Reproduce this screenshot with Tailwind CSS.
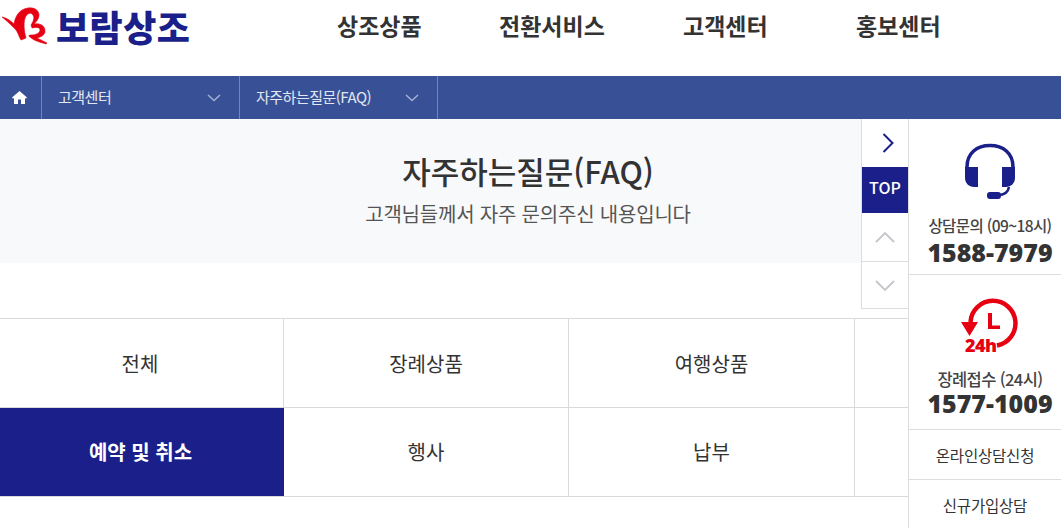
<!DOCTYPE html>
<html lang="ko">
<head>
    <meta charset="UTF-8">
    <title>자주하는질문(FAQ)</title>
    <script src="https://cdn.jsdelivr.net/npm/@tailwindcss/browser@4"></script>
</head>
<body class="bg-white overflow-hidden font-['Noto_Sans_CJK_KR','Noto_Sans',sans-serif]">
<div class="relative w-[1061px] h-[528px] overflow-hidden">

    <!-- Header -->
    <header class="h-[76px] flex items-start">
        <div class="w-[300px] h-[50px] flex items-center">
            <svg width="50" height="42" viewBox="0 4 50 42" class="shrink-0">
                <path fill="#e60012" stroke="#e60012" stroke-width="0.600" d="M2 17C7 18 11 21 14 24C15 17 19 9 28 8C35 7 39 11 39 15C39 19 36 22 34 24C39 23 45 25 45 31C45 35 41 37 37 38L47 43L46 44C40 42 34 41 30 37C28 36 29 35 31 35C36 35 40 33 40 30C40 27 36 27 32 28L31 25C33 22 35 18 33 15C31 12 28 13 26 16C23 21 24 31 26 38L21 40C18 35 18 31 13 27C10 24 6 20 2 17Z"/>
            </svg>
            <span class="text-[36px] leading-none font-black text-[#1a1f8a] tracking-[0.5px] ml-[6px] mt-[2px] whitespace-nowrap">보람상조</span>
        </div>
        <nav class="flex text-[23px] font-bold text-[#333] leading-none pt-[14px]">
            <a class="w-[84px] ml-[37px] whitespace-nowrap">상조상품</a>
            <a class="w-[106px] ml-[78px] whitespace-nowrap">전환서비스</a>
            <a class="w-[84px] ml-[78px] whitespace-nowrap">고객센터</a>
            <a class="w-[84px] ml-[89px] whitespace-nowrap">홍보센터</a>
        </nav>
    </header>

    <!-- Breadcrumb -->
    <div class="h-[43px] bg-[#385196] flex text-[15px] text-[#e3e7f2]">
        <div class="w-[42px] flex items-center justify-center border-r border-[#7486b8] pr-[2px]">
            <svg width="15" height="13" viewBox="0 0 15 13"><path fill="#fff" d="M7.500 0 0 6.500l1 1.200 1-.8V13h4V8.500h3V13h4V6.900l1 .8 1-1.200z"/></svg>
        </div>
        <div class="w-[198px] flex items-center justify-between pl-[16px] pr-[18px] border-r border-[#7486b8]">
            <span class="tracking-[-0.5px]">고객센터</span>
            <svg width="14" height="8" viewBox="0 0 14 8" fill="none" stroke="#a5b1d2" stroke-width="1.500"><path d="m1 1 6 5.500L13 1"/></svg>
        </div>
        <div class="w-[198px] flex items-center justify-between pl-[16px] pr-[18px] border-r border-[#7486b8]">
            <span class="tracking-[-0.5px] whitespace-nowrap">자주하는질문(FAQ)</span>
            <svg width="14" height="8" viewBox="0 0 14 8" fill="none" stroke="#a5b1d2" stroke-width="1.500"><path d="m1 1 6 5.500L13 1"/></svg>
        </div>
    </div>

    <div class="flex h-[409px]">
        <!-- Main -->
        <main class="w-[908px] shrink-0">
            <section class="h-[144px] bg-[#f8f9fb] flex flex-col items-center pt-[30px] pl-[148px]">
                <h1 class="text-[31px] leading-[44px] font-medium text-[#333]">자주하는질문(FAQ)</h1>
                <p class="text-[20px] leading-[28px] tracking-[-0.2px] text-[#555] mt-[7px]">고객님들께서 자주 문의주신 내용입니다</p>
            </section>
            <div class="mt-[55px] border-t border-[#d9d9d9] grid grid-cols-[284px_285px_286px_53px] grid-rows-[89px_89px] text-[20px] text-[#333]">
                <a class="flex items-center justify-center border-r border-b border-[#d9d9d9] pr-[3px] pt-[2px]">전체</a>
                <a class="flex items-center justify-center border-r border-b border-[#d9d9d9] pt-[2px]">장례상품</a>
                <a class="flex items-center justify-center border-r border-b border-[#d9d9d9] pt-[2px]">여행상품</a>
                <a class="border-b border-[#d9d9d9]"></a>
                <a class="flex items-center justify-center bg-[#1a1f8a] text-white font-bold border-b border-[#d9d9d9] pr-[3px]">예약 및 취소</a>
                <a class="flex items-center justify-center border-r border-b border-[#d9d9d9]">행사</a>
                <a class="flex items-center justify-center border-r border-b border-[#d9d9d9]">납부</a>
                <a class="border-b border-[#d9d9d9]"></a>
            </div>
        </main>

        <!-- Right contact rail -->
        <aside class="w-[153px] shrink-0 border-l border-[#ddd] flex flex-col text-[#333]">
            <div class="h-[156px] shrink-0 border-b border-[#ddd] flex flex-col items-center pt-[24px] pl-[10px]">
                <svg width="52" height="58" viewBox="0 0 52 58" fill="none" class="shrink-0">
                    <path stroke="#1a1f8a" stroke-width="3.500" d="M3 24C3 10 13 2.500 26 2.500S49 10 49 24"/>
                    <path fill="#1a1f8a" d="M1 24H14V44H10C5 44 1 40 1 35zM38 24H51V35C51 40 47 44 42 44H38z"/>
                    <path stroke="#1a1f8a" stroke-width="2.500" d="M45 44C44 50 39 52 34 52"/>
                    <rect x="23" y="49" width="14" height="7" rx="3" fill="#1a1f8a"/>
                </svg>
                <p class="text-[15.500px] leading-[20px] tracking-[-0.6px] mt-[14px] font-medium text-[#444] whitespace-nowrap">상담문의 (09~18시)</p>
                <p class="text-[25px] leading-[30px] font-black text-[#333] font-['Noto_Sans',sans-serif] mt-[2px]">1588-7979</p>
            </div>
            <div class="h-[155px] shrink-0 border-b border-[#ddd] flex flex-col items-center pt-[21px] pl-[10px]">
                <svg width="66" height="60" viewBox="-1 0 66 60" fill="none" class="shrink-0">
                    <path stroke="#e60012" stroke-width="4.500" d="M12.500 26A22.500 22.500 0 1 1 39 49.500"/>
                    <path fill="#e60012" d="M3 26H20L11.500 40Z"/>
                    <path fill="#e60012" d="M30 17h4v12.500h8V33H30z"/>
                    <text x="7" y="56" font-size="18" font-weight="900" fill="#e60012" font-family="Noto Sans" letter-spacing="-0.500">24h</text>
                </svg>
                <p class="text-[16.500px] leading-[20px] tracking-[-0.6px] mt-[13px] font-medium text-[#444] whitespace-nowrap">장례접수 (24시)</p>
                <p class="text-[25px] leading-[30px] font-black text-[#333] font-['Noto_Sans',sans-serif] -mt-[1px]">1577-1009</p>
            </div>
            <div class="h-[50px] shrink-0 border-b border-[#ddd] flex items-center justify-center text-[15.500px] tracking-[-0.2px] pt-[2px]">온라인상담신청</div>
            <div class="h-[50px] shrink-0 flex items-center justify-center text-[15.500px] tracking-[-0.2px] pt-[2px]">신규가입상담</div>
        </aside>
    </div>

    <!-- Floating quick buttons, over the hero -->
    <div class="absolute left-[861px] top-[119px] w-[47px] h-[190px] bg-white border-l border-b border-[#ddd] flex flex-col">
        <div class="h-[48px] flex items-center justify-center pl-[5px]">
            <svg width="12" height="22" viewBox="0 0 12 22" fill="none" stroke="#1a1f8a" stroke-width="2"><path d="m1.500 2 9 9-9 9"/></svg>
        </div>
        <div class="h-[46px] bg-[#1a1f8a] text-white text-[16px] font-medium flex items-center justify-center pb-[6px]">TOP</div>
        <div class="h-[49px] flex items-center justify-center border-b border-[#ddd]">
            <svg width="20" height="12" viewBox="0 0 20 12" fill="none" stroke="#c4c6cc" stroke-width="1.800"><path d="m1 11 9-9 9 9"/></svg>
        </div>
        <div class="flex-1 flex items-center justify-center pt-[2px]">
            <svg width="20" height="12" viewBox="0 0 20 12" fill="none" stroke="#c4c6cc" stroke-width="1.800"><path d="m1 1 9 9 9-9"/></svg>
        </div>
    </div>
</div>
</body>
</html>
